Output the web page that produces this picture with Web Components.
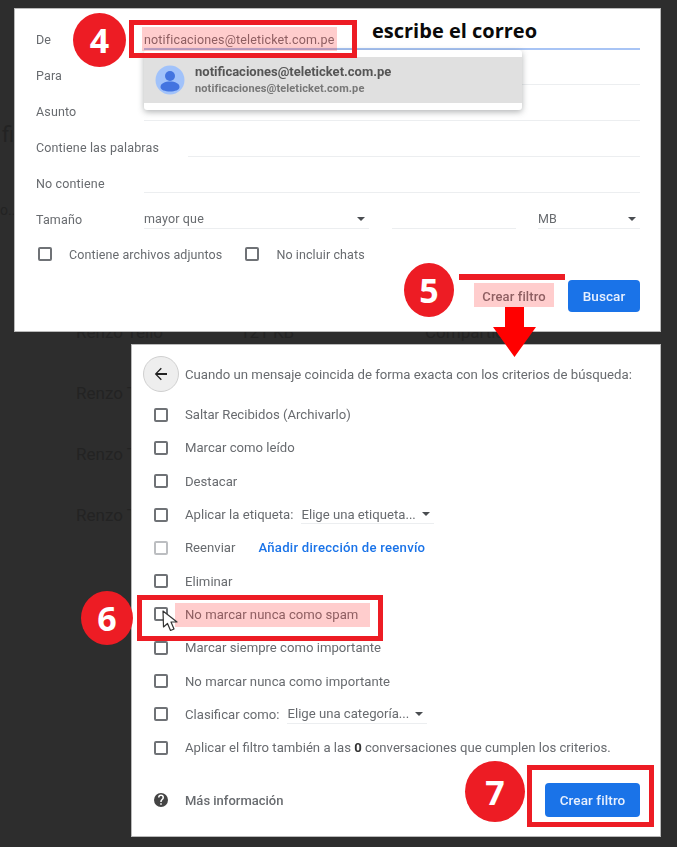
<!DOCTYPE html>
<html lang="es"><head><meta charset="utf-8"><title>Filtro</title>
<style>
html,body{margin:0;height:100%}
body{background:#2d2d2d;width:677px;height:847px;overflow:hidden;position:relative;font-family:Roboto,"Liberation Sans",sans-serif}
</style></head><body>
<ghost-text style="left:2px;top:122px;font-size:22px">fi</ghost-text>
<ghost-text style="left:0;top:202px;font-size:14px">o...</ghost-text>
<ghost-text style="left:76px;top:322px">Renzo Tello</ghost-text>
<ghost-text style="left:240px;top:322px">121 KB</ghost-text>
<ghost-text style="left:425px;top:322px">Compartida</ghost-text>
<ghost-text style="left:76px;top:383px">Renzo Tello</ghost-text>
<ghost-text style="left:76px;top:444px">Renzo Tello</ghost-text>
<ghost-text style="left:76px;top:505px">Renzo Tello</ghost-text>

<search-panel></search-panel>
<action-panel></action-panel>

<hl-mark style="left:142px;top:27px;width:195px;height:24px"></hl-mark>
<mark-box style="left:129px;top:20px;width:228px;height:38px"></mark-box>
<step-badge n="4" style="left:73px;top:13px;width:53px;height:54px"></step-badge>
<note-text style="left:372px;top:18px">escribe el correo</note-text>

<step-badge n="5" style="left:404px;top:263px;width:50px;height:54px"></step-badge>
<red-bar style="left:459px;top:274px;width:106px;height:6px"></red-bar>
<hl-mark style="left:474px;top:283px;width:80px;height:24px"></hl-mark>
<down-arrow style="left:493px;top:307px"></down-arrow>

<step-badge n="6" style="left:81px;top:591px;width:52px;height:54px"></step-badge>
<hl-mark style="left:175px;top:603px;width:195px;height:24px"></hl-mark>
<mark-box style="left:137px;top:595px;width:246px;height:46px"></mark-box>
<pointer-cursor style="left:161px;top:609px"></pointer-cursor>

<step-badge n="7" style="left:465px;top:761px;width:60px;height:61px"></step-badge>
<mark-box style="left:527px;top:765px;width:127px;height:62px"></mark-box>

<script>
const FONT = 'Roboto,"Liberation Sans",sans-serif';
function def(name, html, setup){
  customElements.define(name, class extends HTMLElement{
    connectedCallback(){
      if(this.shadowRoot) return;
      const r=this.attachShadow({mode:'open'});
      r.innerHTML = typeof html==='function'?html(this):html;
      if(setup) setup(this,r);
    }
  });
}
def('ghost-text',`<style>:host{position:absolute;color:#232323;font:17px ${FONT};white-space:nowrap}</style><slot></slot>`);
def('note-text',`<style>:host{position:absolute;color:#0a0a0a;font:700 20px/26px "Open Sans",sans-serif;white-space:nowrap}</style><slot></slot>`);
def('hl-mark',`<style>:host{position:absolute;display:block;background:rgba(255,60,60,.26)}</style>`);
def('mark-box',`<style>:host{position:absolute;display:block;box-sizing:border-box;border:5px solid #ed1c24}</style>`);
def('red-bar',`<style>:host{position:absolute;display:block;background:#ed1c24}</style>`);
def('step-badge',e=>`<style>:host{position:absolute;display:flex;align-items:center;justify-content:center;background:#ed1c24;border-radius:50%;color:#fff;font:700 34px/1 "Open Sans",sans-serif}</style>${e.getAttribute('n')}`);
def('down-arrow',`<style>:host{position:absolute;display:block;width:43px;height:50px}svg{display:block}</style><svg width="43" height="50" viewBox="0 0 43 50"><path d="M12 0h19v20h12L21.5 50 0 20h12z" fill="#f00"/></svg>`);
def('pointer-cursor',`<style>:host{position:absolute;display:block;width:18px;height:26px}svg{display:block}</style><svg width="18" height="26" viewBox="0 0 18 26"><path d="M2 2l.5 16 4-3.500 3 7 3.500-1.500-3-7H16z" fill="#fff" stroke="#333" stroke-width="1.2" stroke-linejoin="round"/></svg>`);

def('check-box',`<style>:host{display:block;flex:none;box-sizing:border-box;width:14px;height:14px;border:2px solid var(--cb,#6f7276);border-radius:2px;background:#fff}</style>`);
def('caret-mark',`<style>:host{display:block;flex:none;width:0;height:0;border:4px solid transparent;border-top:4px solid #4a4d51;border-bottom:0}</style>`);

def('field-row',e=>`<style>
:host{display:flex;align-items:flex-start;height:36px;color:#686b6f;font:12.5px ${FONT}}
.l{flex:none;width:108px;height:36px;padding-top:3px;box-sizing:border-box;display:flex;align-items:center;letter-spacing:.15px}
:host([wide]) .l{width:152px}
.f{flex:1;box-sizing:border-box;height:29px;padding-top:10px;display:flex;align-items:center;border-bottom:1px solid #eceef0}
:host([active]) .f{border-bottom:2px solid #a8c4f5;height:30px}
</style><div class="l">${e.getAttribute('label')}</div><div class="f"><slot></slot></div>`);

def('select-field',e=>`<style>
:host{display:flex;align-items:center;justify-content:space-between;box-sizing:border-box;height:29px;padding:9px 4px 0 0;border-bottom:1px solid #eceef0;color:#686b6f;font:12.5px ${FONT};letter-spacing:.15px}
:host([nocaret]) caret-mark{display:none}
</style><span><slot></slot></span><caret-mark></caret-mark>`);

def('size-row',`<style>
:host{display:flex;height:36px;color:#686b6f;font:12.5px ${FONT}}
.l{flex:none;width:108px;height:36px;padding-top:3px;box-sizing:border-box;display:flex;align-items:center;letter-spacing:.15px}
.g{display:grid;flex:1;align-items:start;grid-template-columns:225px 124px 102px;justify-content:space-between}
</style><div class="l">Tamaño</div><div class="g"><select-field>mayor que</select-field><select-field nocaret></select-field><select-field>MB</select-field></div>`);

def('check-label',`<style>
:host{display:flex;align-items:center;gap:17px;color:#686b6f;font:12.5px ${FONT};letter-spacing:.1px}
</style><check-box></check-box><span><slot></slot></span>`);

def('blue-button',`<style>
:host{display:flex;align-items:center;justify-content:center;background:#1a73e8;color:#e8f0fe;border-radius:4px;font:500 13.5px ${FONT};letter-spacing:.1px}
</style><slot></slot>`);

def('contact-menu',`<style>
:host{position:absolute;left:130px;top:42px;width:378px;height:60px;display:block;box-sizing:border-box;padding:7px 0;background:#fff;border-radius:3px;box-shadow:0 2px 6px rgba(60,64,67,.4)}
.i{height:46px;background:#e0e0e0;display:flex;align-items:center;gap:10px;padding-left:11px}
.t{display:flex;flex-direction:column;gap:3px}
b{font:700 13px/14px ${FONT};color:#555}
small{font:700 11px/13px ${FONT};color:#777;letter-spacing:.1px}
svg{display:block;flex:none}
</style><div class="i"><svg width="30" height="30" viewBox="0 0 30 30"><circle cx="15" cy="15" r="14.500" fill="#a1c2fa"/><circle cx="15" cy="11" r="5" fill="#4374e0"/><path d="M5.500 22c0-3.600 4.500-5.500 9.500-5.500s9.500 1.900 9.500 5.500c0 3-4.500 4.500-9.500 4.500S5.500 25 5.500 22z" fill="#4374e0"/></svg><div class="t"><b>notificaciones@teleticket.com.pe</b><small>notificaciones@teleticket.com.pe</small></div></div>`);

def('search-panel',`<style>
:host{position:absolute;left:14px;top:8px;width:647px;height:324px;box-sizing:border-box;display:flex;flex-direction:column;padding:12px 21px 20px 22px;background:#fff;box-shadow:0 0 0 1px #b9b9b9 inset;filter:blur(.3px)}
.c{display:flex;align-items:center;height:36px;gap:23px;margin-top:0}
.b{margin-top:auto;display:flex;justify-content:flex-end;align-items:center;gap:14px;height:32px}
.cf{width:80px;text-align:center;color:#686b6f;font:500 13px ${FONT};letter-spacing:.1px}
blue-button{width:72px;height:32px}
span.v{color:#686b6f;letter-spacing:.15px;font-size:12.5px}
</style>
<field-row label="De" active><span class="v">notificaciones@teleticket.com.pe</span></field-row>
<field-row label="Para"></field-row>
<field-row label="Asunto"></field-row>
<field-row label="Contiene las palabras" wide></field-row>
<field-row label="No contiene"></field-row>
<size-row></size-row>
<div class="c"><check-label style="margin-left:2px">Contiene archivos adjuntos</check-label><check-label>No incluir chats</check-label></div>
<div class="b"><div class="cf">Crear filtro</div><blue-button>Buscar</blue-button></div>
<contact-menu></contact-menu>`);

def('action-row',`<style>
:host{display:flex;align-items:center;gap:17px;height:33.3px;color:#686b6f;font:13.15px ${FONT};white-space:nowrap}
:host([off]){--cb:#bcbec1}
::slotted(a){color:#1a73e8;font-weight:500;margin-left:15px;letter-spacing:.25px}
</style><check-box></check-box><div style="display:flex;align-items:center;gap:8px"><slot></slot></div>`);

def('menu-pick',`<style>
:host{display:inline-flex;align-items:center;justify-content:space-between;box-sizing:border-box;height:19px;gap:6px;padding-right:4px;border-bottom:1px solid #eceef0;color:#686b6f}
</style><span><slot></slot></span><caret-mark></caret-mark>`);

def('action-panel',`<style>
:host{position:absolute;left:131px;top:344px;width:530px;height:493px;box-sizing:border-box;display:flex;flex-direction:column;padding:12px 21px 0 23px;background:#fff;box-shadow:0 0 0 1px #b9b9b9 inset;filter:blur(.3px)}
.h{display:flex;align-items:center;gap:6px;height:36px;margin-left:-11px;margin-bottom:8px;color:#686b6f;font:13.2px ${FONT};white-space:nowrap}
.back{flex:none;width:36px;height:36px;box-sizing:border-box;border:1px solid #d0d0d0;border-radius:50%;background:#eeeeee;display:flex;align-items:center;justify-content:center}
.list{display:flex;flex-direction:column;margin-top:-2px}
.info{display:flex;align-items:center;gap:17px;margin-top:24px;height:24px;color:#686b6f;font:500 13px ${FONT}}
.foot{position:relative}
blue-button{position:absolute;left:391px;top:-29px;width:95px;height:34px}
svg{display:block;flex:none}
</style>
<div class="h"><div class="back"><svg width="14" height="14" viewBox="0 0 14 14"><path d="M13 6.100H3.500l4.300-4.300L6.800.8.800 7l6 6.200 1-1-4.300-4.300H13z" fill="#222"/></svg></div><span>Cuando un mensaje coincida de forma exacta con los criterios de búsqueda:</span></div>
<div class="list">
<action-row>Saltar Recibidos (Archivarlo)</action-row>
<action-row>Marcar como leído</action-row>
<action-row>Destacar</action-row>
<action-row>Aplicar la etiqueta:<menu-pick>Elige una etiqueta...</menu-pick></action-row>
<action-row off>Reenviar<a>Añadir dirección de reenvío</a></action-row>
<action-row>Eliminar</action-row>
<action-row>No marcar nunca como spam</action-row>
<action-row>Marcar siempre como importante</action-row>
<action-row>No marcar nunca como importante</action-row>
<action-row>Clasificar como:<menu-pick>Elige una categoría...</menu-pick></action-row>
<action-row><span>Aplicar el filtro también a las <b style="color:#333">0</b> conversaciones que cumplen los criterios.</span></action-row>
</div>
<div class="info"><svg width="14" height="14" viewBox="0 0 24 24"><path fill="#444" d="M12 0a12 12 0 1 0 0 24 12 12 0 0 0 0-24zm1.300 20h-2.600v-2.600h2.600zm2.700-9.200-1.200 1.200c-1 1-1.500 1.800-1.500 3.500h-2.600v-.6c0-1.400.5-2.700 1.500-3.700l1.600-1.600c.5-.5.700-1.100.7-1.800a2.500 2.500 0 0 0-5 0H6.900a5.100 5.100 0 0 1 10.200 0c0 1.200-.4 2.200-1.100 3z"/></svg><span>Más información</span></div>
<div class="foot"><blue-button>Crear filtro</blue-button></div>`);
</script>
</body></html>
